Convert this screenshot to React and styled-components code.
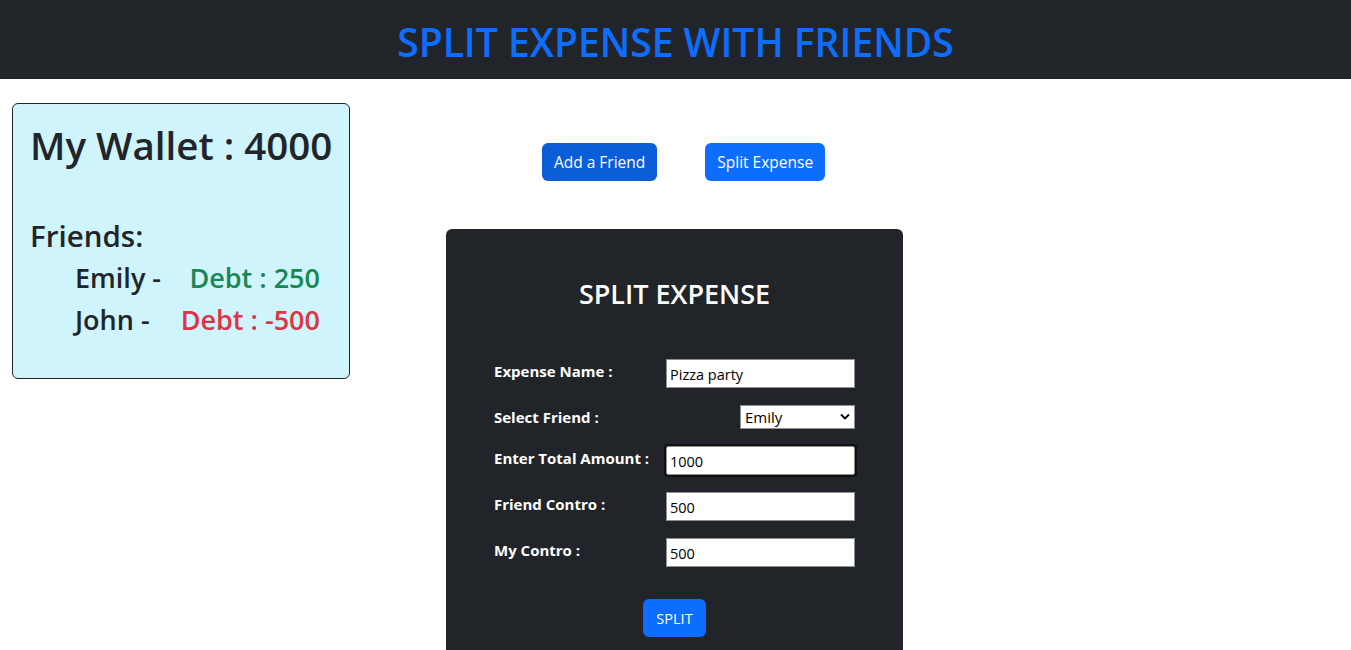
import React from 'react';
import styled, { createGlobalStyle } from 'styled-components';

const DARK = '#212529';
const BLUE = '#0d6efd';
const FONT = '"Open Sans", "Noto Sans", "Liberation Sans", sans-serif';

const GlobalStyle = createGlobalStyle`
  body {
    margin: 0;
    font-family: ${FONT};
    color: ${DARK};
    background: #fff;
  }
  * { box-sizing: border-box; }
`;

const Header = styled.header`
  height: 79px;
  background: ${DARK};
  display: flex;
  align-items: center;
  justify-content: center;
`;

const Title = styled.h1`
  margin: 0;
  color: ${BLUE};
  font-size: 39px;
  font-weight: 600;
  line-height: 1;
  padding-top: 3px;
`;

const Main = styled.main`
  display: flex;
  align-items: flex-start;
  padding: 24px 0 0 12px;
`;

const WalletCard = styled.section`
  width: 338px;
  height: 276px;
  flex-shrink: 0;
  background: #cff4fc;
  border: 1px solid ${DARK};
  border-radius: 6px;
  padding: 18px 14px 0 17px;
`;

const WalletTitle = styled.h1`
  margin: 0 0 50px;
  font-size: 38.5px;
  font-weight: 600;
  line-height: 1.2;
  white-space: nowrap;
`;

const FriendsTitle = styled.h2`
  margin: 0 0 7px;
  font-size: 29.5px;
  font-weight: 600;
  line-height: 1.2;
`;

const FriendRow = styled.div`
  display: flex;
  justify-content: space-between;
  padding: 0 15px 0 45px;
  margin-bottom: 8px;
  font-size: 27px;
  line-height: 34px;
  font-weight: 600;
`;

const Debt = styled.span`
  color: ${p => (p.$negative ? '#dc3545' : '#198754')};
`;

const Center = styled.div`
  width: 649px;
  display: flex;
  flex-direction: column;
  align-items: center;
`;

const ButtonRow = styled.div`
  display: flex;
  gap: 48px;
  margin-top: 40px;
  padding-left: 18px;
`;

const Button = styled.button`
  height: 38px;
  padding: 0 12px;
  border: none;
  border-radius: 6px;
  background: ${p => (p.$active ? '#0b5ed7' : BLUE)};
  color: #fff;
  font-family: ${FONT};
  font-size: 15.5px;
  cursor: pointer;
`;

const Panel = styled.section`
  width: 457px;
  margin-top: 48px;
  background: ${DARK};
  border-radius: 6px;
  padding: 49px 48px 48px;
  color: #fff;
`;

const PanelTitle = styled.h3`
  margin: 0 0 49px;
  text-align: center;
  font-size: 27px;
  font-weight: 600;
  line-height: 1.2;
`;

const Form = styled.form`
  display: grid;
  grid-template-columns: 172px 189px;
  row-gap: 17px;
  align-items: start;
`;

const Label = styled.label`
  font-weight: 700;
  font-size: 15px;
  line-height: 24px;
  white-space: nowrap;
`;

const Input = styled.input`
  width: 189px;
  height: 29px;
  padding: 2px 3px 0;
  border: 1px solid #8f8f8f;
  border-radius: ${p => (p.$focused ? '2px' : '0')};
  background: #fff;
  color: #000;
  font-family: ${FONT};
  font-size: 14.5px;
  outline: ${p => (p.$focused ? '2px solid #101010' : 'none')};
  outline-offset: 0;
`;

const SelectWrap = styled.div`
  position: relative;
  justify-self: end;
  width: 115px;
  height: 24px;
`;

const Select = styled.select`
  appearance: none;
  width: 100%;
  height: 100%;
  padding: 0 20px 0 4px;
  border: 1px solid #8f8f8f;
  border-radius: 0;
  background: #fff;
  color: #000;
  font-family: ${FONT};
  font-size: 15px;
`;

const Chevron = styled.svg`
  position: absolute;
  right: 5px;
  top: 8px;
  pointer-events: none;
`;

const SubmitRow = styled.div`
  display: flex;
  justify-content: center;
  margin-top: 32px;
`;

const SplitButton = styled(Button)`
  width: 63px;
  padding: 0;
  font-size: 14.5px;
`;

const friends = [
  { name: 'Emily', debt: 250 },
  { name: 'John', debt: -500 },
];

export default function App() {
  return (
    <>
      <GlobalStyle />
      <Header>
        <Title>SPLIT EXPENSE WITH FRIENDS</Title>
      </Header>
      <Main>
        <WalletCard>
          <WalletTitle>My Wallet : 4000</WalletTitle>
          <FriendsTitle>Friends:</FriendsTitle>
          {friends.map(f => (
            <FriendRow key={f.name}>
              <span>{f.name} -</span>
              <Debt $negative={f.debt < 0}>Debt : {f.debt}</Debt>
            </FriendRow>
          ))}
        </WalletCard>
        <Center>
          <ButtonRow>
            <Button $active>Add a Friend</Button>
            <Button>Split Expense</Button>
          </ButtonRow>
          <Panel>
            <PanelTitle>SPLIT EXPENSE</PanelTitle>
            <Form onSubmit={e => e.preventDefault()}>
              <Label>Expense Name :</Label>
              <Input defaultValue="Pizza party" />
              <Label>Select Friend :</Label>
              <SelectWrap>
                <Select defaultValue="Emily">
                  <option>Emily</option>
                  <option>John</option>
                </Select>
                <Chevron width="10" height="7" viewBox="0 0 10 7">
                  <path d="M1 1.5 L5 5.5 L9 1.5" fill="none" stroke="#000" strokeWidth="1.8" />
                </Chevron>
              </SelectWrap>
              <Label>Enter Total Amount :</Label>
              <Input $focused defaultValue="1000" />
              <Label>Friend Contro :</Label>
              <Input defaultValue="500" />
              <Label>My Contro :</Label>
              <Input defaultValue="500" />
            </Form>
            <SubmitRow>
              <SplitButton type="button">SPLIT</SplitButton>
            </SubmitRow>
          </Panel>
        </Center>
      </Main>
    </>
  );
}
